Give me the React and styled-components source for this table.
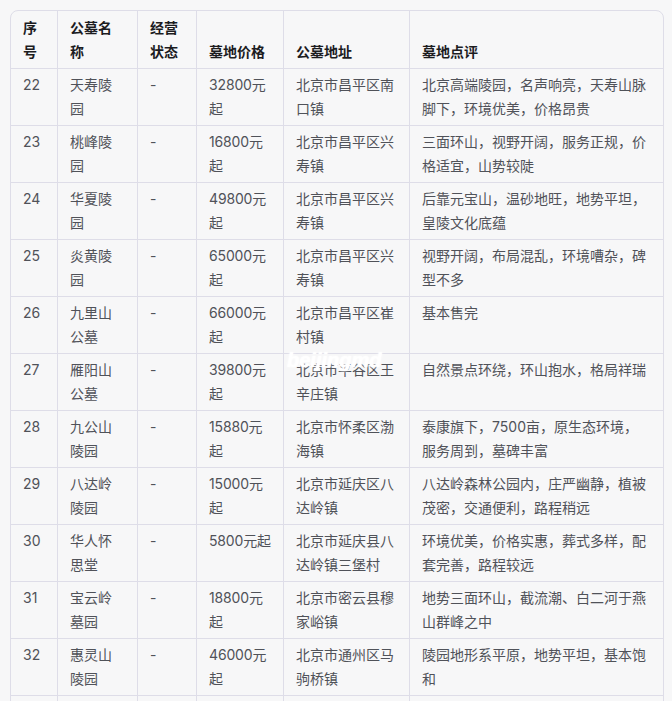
import styled, { createGlobalStyle } from "styled-components";

const GlobalStyle = createGlobalStyle`
  html, body {
    margin: 0;
    padding: 0;
    background: #f7f7f8;
  }
  body {
    font-family: "Inter", "Noto Sans CJK SC", sans-serif;
  }
`

const Page = styled.div`
  position: relative;
  padding: 10px 9px 0 10px;
  height: 701px;
  overflow: hidden;
  box-sizing: border-box;
`

const Table = styled.table`
  width: 653px;
  table-layout: fixed;
  border-collapse: separate;
  border-spacing: 0;
  border: 1px solid #dedde8;
  border-radius: 8px;
  font-size: 14px;
  line-height: 24px;
  th, td {
    border-right: 1px solid #dedde8;
    border-bottom: 1px solid #dedde8;
    padding: 4px 12px;
    text-align: left;
    word-break: break-all;
  }
  th:last-child, td:last-child {
    border-right: none;
  }
`

const HeadCell = styled.th`
  vertical-align: bottom;
  font-weight: 600;
  color: #1c1c1f;
  padding: 5px 12px 4px !important;
`

const Cell = styled.td`
  vertical-align: top;
  color: #505259;
  letter-spacing: ${p => (p.$tight ? "-0.15px" : "normal")};
`

const Watermark = styled.span`
  position: absolute;
  left: 287px;
  top: 349px;
  font-family: "Liberation Sans", sans-serif;
  font-size: 20px;
  font-weight: bold;
  font-style: italic;
  color: #ffffff;
  text-shadow: 0 0 1px #ffffff, 0 0 3px rgba(255, 255, 255, 0.9);
  pointer-events: none;
`

const widths = [47, 80, 59, 87, 126, 253]
const headers = ["序号", "公墓名称", "经营状态", "墓地价格", "公墓地址", "墓地点评"]

const rows = [
  ["22", "天寿陵园", "-", "32800元起", "北京市昌平区南口镇", "北京高端陵园，名声响亮，天寿山脉脚下，环境优美，价格昂贵"],
  ["23", "桃峰陵园", "-", "16800元起", "北京市昌平区兴寿镇", "三面环山，视野开阔，服务正规，价格适宜，山势较陡"],
  ["24", "华夏陵园", "-", "49800元起", "北京市昌平区兴寿镇", "后靠元宝山，温砂地旺，地势平坦，皇陵文化底蕴"],
  ["25", "炎黄陵园", "-", "65000元起", "北京市昌平区兴寿镇", "视野开阔，布局混乱，环境嘈杂，碑型不多"],
  ["26", "九里山公墓", "-", "66000元起", "北京市昌平区崔村镇", "基本售完"],
  ["27", "雁阳山公墓", "-", "39800元起", "北京市平谷区王辛庄镇", "自然景点环绕，环山抱水，格局祥瑞"],
  ["28", "九公山陵园", "-", "15880元起", "北京市怀柔区渤海镇", "泰康旗下，7500亩，原生态环境，服务周到，墓碑丰富"],
  ["29", "八达岭陵园", "-", "15000元起", "北京市延庆区八达岭镇", "八达岭森林公园内，庄严幽静，植被茂密，交通便利，路程稍远"],
  ["30", "华人怀思堂", "-", "5800元起", "北京市延庆县八达岭镇三堡村", "环境优美，价格实惠，葬式多样，配套完善，路程较远"],
  ["31", "宝云岭墓园", "-", "18800元起", "北京市密云县穆家峪镇", "地势三面环山，截流潮、白二河于燕山群峰之中"],
  ["32", "惠灵山陵园", "-", "46000元起", "北京市通州区马驹桥镇", "陵园地形系平原，地势平坦，基本饱和"],
  ["33", "万佛园", "-", "28000元起", "北京市昌平区十三陵镇", "背山面水，环境清幽，交通便利"],
]

export default function App() {
  return (
    <Page>
      <GlobalStyle />
      <Table>
        <colgroup>
          {widths.map((w, i) => <col key={i} style={{ width: w }} />)}
        </colgroup>
        <thead>
          <tr>
            {headers.map(h => <HeadCell key={h}>{h}</HeadCell>)}
          </tr>
        </thead>
        <tbody>
          {rows.map(r => (
            <tr key={r[0]}>
              {r.map((c, i) => <Cell key={i} $tight={i === 3}>{c}</Cell>)}
            </tr>
          ))}
        </tbody>
      </Table>
      <Watermark>beijingmd</Watermark>
    </Page>
  );
}
